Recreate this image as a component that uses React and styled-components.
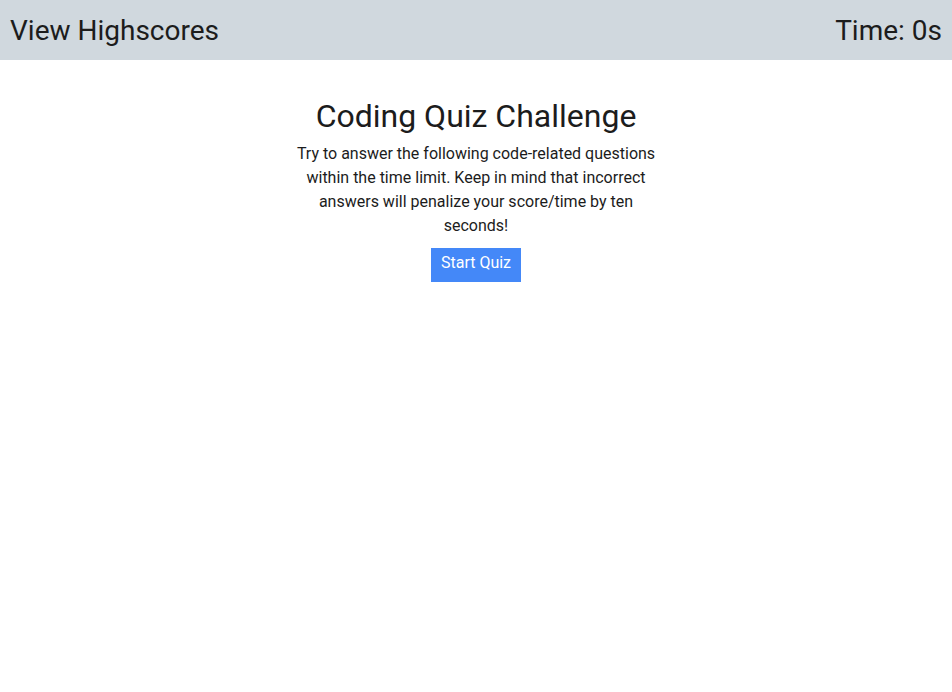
import React from 'react'
import styled, { createGlobalStyle } from 'styled-components'

const GlobalStyle = createGlobalStyle`
body {
    margin: 0;
    font-family: Roboto, "Liberation Sans", sans-serif;
    color: #1c1c1c;
    background: #fff;
}
`;

const Header = styled.header`
display: flex;
justify-content: space-between;
align-items: center;
height: 60px;
padding: 0 10px;
background: #d0d8de;
font-size: 28px;
`;

const HeaderItem = styled.div`
cursor: ${props => props.clickable ? 'pointer' : 'default'};
`;

const Main = styled.main`
display: flex;
flex-direction: column;
align-items: center;
padding-top: 37px;
text-align: center;
`;

const Title = styled.h1`
margin: 0;
font-size: 32px;
font-weight: 400;
line-height: 38px;
`;

const Intro = styled.p`
width: 370px;
margin: 7px 0 10px;
font-size: 16px;
line-height: 24px;
`;

const StartButton = styled.button`
width: 90px;
height: 34px;
border: 0;
padding: 0 0 6px;
background: #4488f8;
color: #fff;
font-family: inherit;
font-size: 16px;
cursor: pointer;
`;

const App = () => (
    <>
        <GlobalStyle />
        <Header>
            <HeaderItem clickable>View Highscores</HeaderItem>
            <HeaderItem>Time: 0s</HeaderItem>
        </Header>
        <Main>
            <Title>Coding Quiz Challenge</Title>
            <Intro>
                Try to answer the following code-related questions within the time limit. Keep in mind that incorrect answers will penalize your score/time by ten seconds!
            </Intro>
            <StartButton>Start Quiz</StartButton>
        </Main>
    </>
);

export default App;
